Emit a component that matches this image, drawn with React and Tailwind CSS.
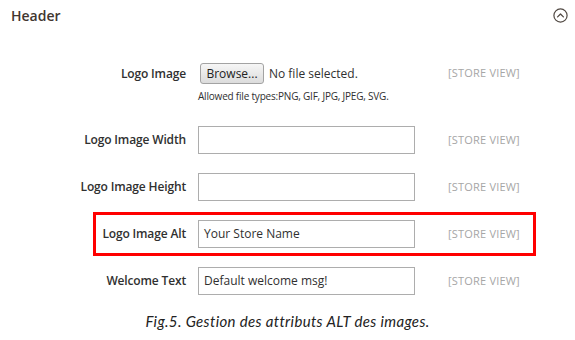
function StoreView() {
    return (
        <span className="ml-[33px] text-[11px] text-[#a6a6a6] tracking-[0.2px]">[STORE VIEW]</span>
    )
}

function TextRow({ label, value, highlight }) {
    return (
        <div
            className={
                highlight
                    ? 'flex items-center h-[44px] border-[3px] border-[#ff0000]'
                    : 'flex items-center h-[44px] border-[3px] border-transparent'
            }
        >
            <label className="w-[90px] shrink-0 flex justify-end text-[12px] font-semibold text-[#303030] whitespace-nowrap tracking-[-0.15px]">
                {label}
            </label>
            <div className="ml-[12px] shrink-0 w-[217px] h-[28px] border border-[#adadad] bg-white flex items-center px-[5px] text-[12px] text-[#303030]">
                {value}
            </div>
            <StoreView />
        </div>
    )
}

function App() {
    return (
        <div className="w-[575px] h-[340px] bg-white overflow-hidden" style={{ fontFamily: '"Open Sans", "Liberation Sans", sans-serif' }}>
            {/* Section title */}
            <div className="flex items-center justify-between h-[31px] pl-[11px] pr-[7px]">
                <h2 className="text-[14px] font-semibold text-[#41362f]">Header</h2>
                <svg width="15" height="15" viewBox="0 0 15 15" fill="none">
                    <circle cx="7.5" cy="7.5" r="6.6" stroke="#514943" strokeWidth="1.2" />
                    <path d="M4.6 8.9 L7.5 6 L10.4 8.9" stroke="#514943" strokeWidth="1.3" strokeLinecap="round" strokeLinejoin="round" />
                </svg>
            </div>

            <div className="flex flex-col gap-[3px] ml-[93px] w-[443px] mt-[29px]">
                {/* Logo upload */}
                <div className="flex items-start h-[55px] border-[3px] border-transparent">
                    <label className="w-[90px] shrink-0 h-[21px] flex items-center justify-end text-[12px] font-semibold text-[#303030] whitespace-nowrap tracking-[-0.15px]">
                        Logo Image
                    </label>
                    <div className="ml-[12px] shrink-0 w-[217px]">
                        <div className="flex items-center h-[21px]">
                            <button className="ml-[2px] h-[21px] w-[64px] rounded-[3px] border border-[#a3a3a3] bg-gradient-to-b from-[#f6f6f6] to-[#dcdcdc] text-[12px] text-[#222]">
                                Browse...
                            </button>
                            <span className="ml-[5px] text-[12px] text-[#303030]">No file selected.</span>
                        </div>
                        <p className="mt-[5px] text-[10px] leading-[14px] text-[#303030] whitespace-nowrap tracking-[-0.2px]">
                            Allowed file types:PNG, GIF, JPG, JPEG, SVG.
                        </p>
                    </div>
                    <div className="h-[21px] flex items-center">
                        <StoreView />
                    </div>
                </div>

                <TextRow label="Logo Image Width" value="" />
                <TextRow label="Logo Image Height" value="" />
                <TextRow label="Logo Image Alt" value="Your Store Name" highlight />
                <TextRow label="Welcome Text" value="Default welcome msg!" />
            </div>

            <p className="mt-[8px] text-center text-[15px] leading-[20px] italic text-[#222] tracking-[0.35px]" style={{ fontFamily: 'Lato, "Liberation Sans", sans-serif' }}>
                Fig.5. Gestion des attributs ALT des images.
            </p>
        </div>
    )
}

export default App
